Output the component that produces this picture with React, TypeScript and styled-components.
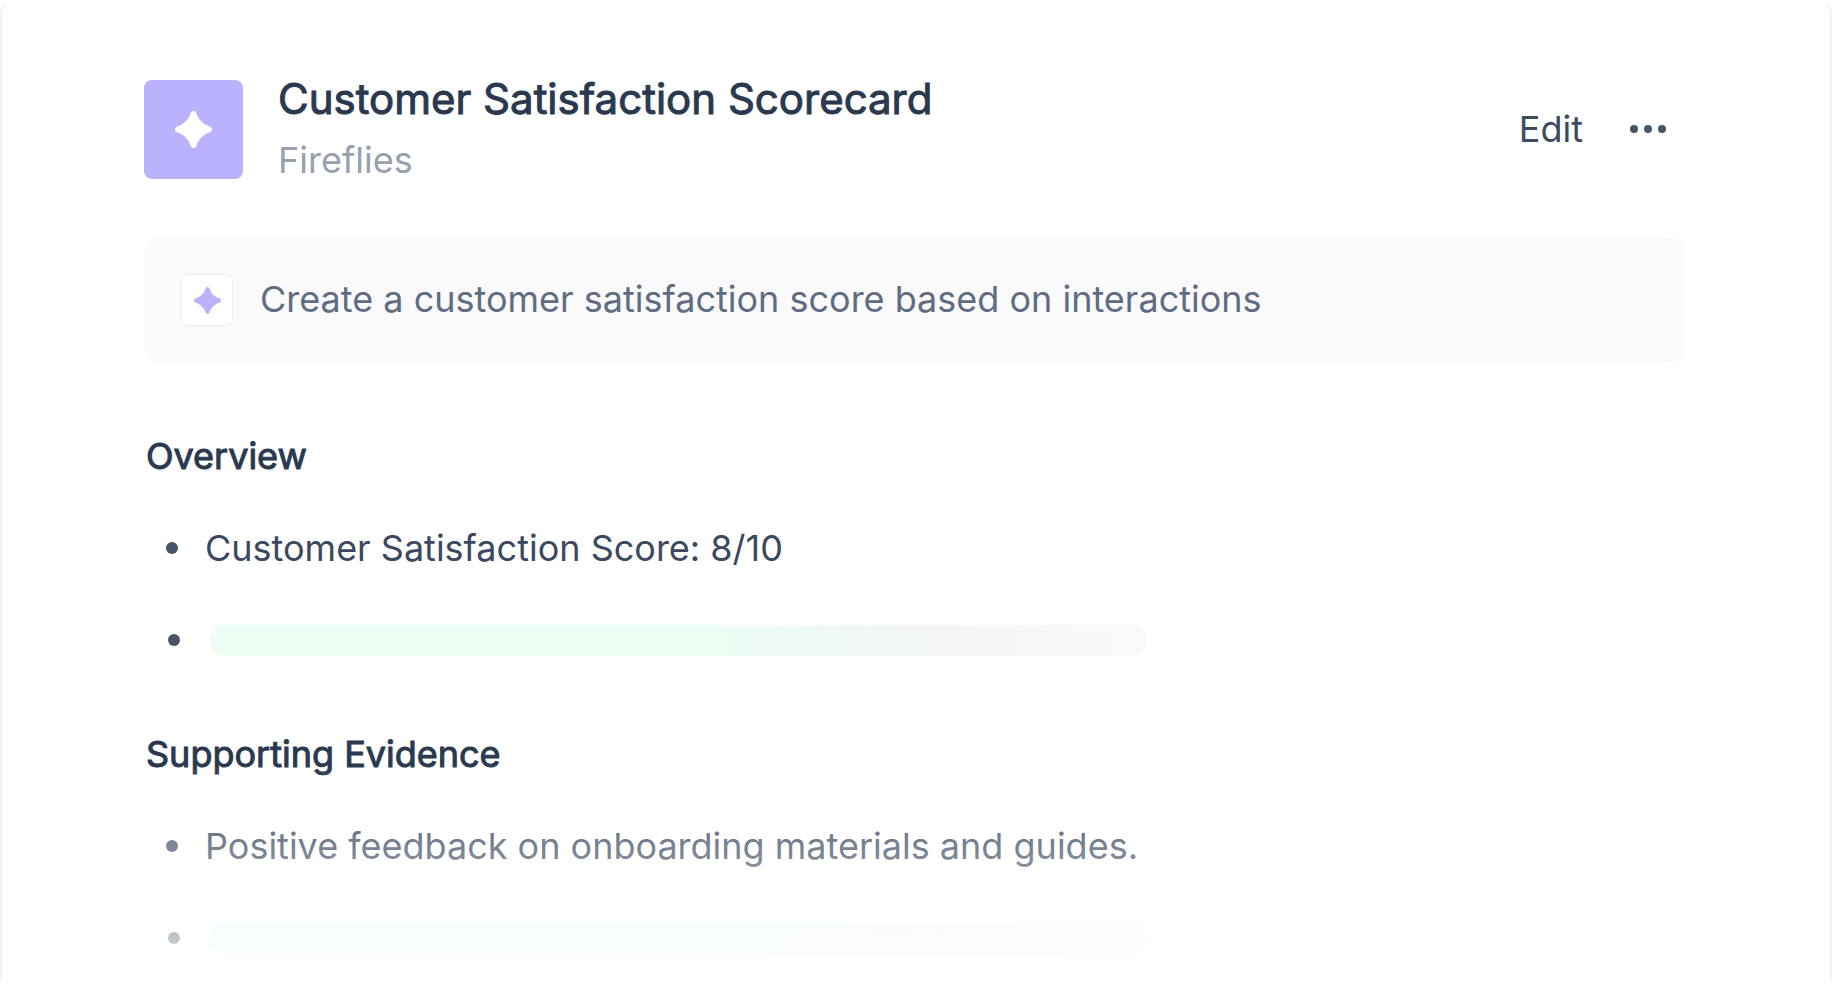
import React from "react";
import styled, { createGlobalStyle } from "styled-components";

const GlobalStyle = createGlobalStyle`
  * { box-sizing: border-box; }
  body {
    margin: 0;
    background: #fff;
    font-family: Inter, "Liberation Sans", sans-serif;
    font-size: 36px;
    line-height: 48px;
    color: #3b485e;
  }
  h1, h2, p, ul { margin: 0; padding: 0; }
`;

const Card = styled.main`
  position: relative;
  min-height: 100vh;
  padding: 75px 145px 27px 142px;
  border: solid #f0f4f5;
  border-width: 0 2px;
  border-radius: 14px;

  /* content fades out towards the bottom edge */
  &::after {
    content: "";
    position: absolute;
    inset: auto 0 0;
    height: 226px;
    background: linear-gradient(rgba(255, 255, 255, 0), rgba(255, 255, 255, 0.86));
    pointer-events: none;
  }
`;

const Header = styled.header`
  display: flex;
  align-items: center;
`;

const AppIcon = styled.div`
  display: flex;
  align-items: center;
  justify-content: center;
  width: 99px;
  height: 99px;
  border-radius: 8px;
  background: #bbb2fd;
  color: #fff;
`;

const Titles = styled.div`
  display: flex;
  flex: 1;
  flex-direction: column;
  gap: 13px;
  margin-left: 35px;
`;

const Title = styled.h1`
  font-size: 42px;
  font-weight: 400;
  line-height: 48px;
  color: #2b394f;
  -webkit-text-stroke: 1px currentColor;
`;

const Subtitle = styled.p`
  color: #98a1af;
`;

const Actions = styled.div`
  display: flex;
  align-items: center;
  gap: 46px;
  padding: 0 18px 2px 0;
`;

const Button = styled.button`
  display: flex;
  align-items: center;
  padding: 0;
  border: 0;
  background: none;
  font: inherit;
  color: #3d4b60;
  cursor: pointer;
`;

const Prompt = styled.section`
  display: flex;
  align-items: center;
  gap: 26px;
  min-height: 126px;
  margin-top: 53px;
  padding: 36px;
  border-radius: 16px;
  background: #fafafc;
  color: #606c81;
`;

const PromptIcon = styled.div`
  display: flex;
  align-items: center;
  justify-content: center;
  width: 54px;
  height: 54px;
  border: 2px solid #f0f4f6;
  border-radius: 8px;
  background: #fff;
  color: #bbb2fd;
`;

const PromptText = styled.p`
  padding-bottom: 2px;
`;

const Report = styled.div`
  display: flex;
  flex-direction: column;
  gap: 66px;
  margin-top: 69px;
  padding-left: 2px;
`;

const Heading = styled.h2`
  margin-bottom: 44px;
  font-size: 36px;
  font-weight: 400;
  color: #2b394f;
  -webkit-text-stroke: 1px currentColor;
`;

const List = styled.ul`
  display: flex;
  flex-direction: column;
  gap: 44px;
  list-style: none;
`;

const Item = styled.li<{ $loading?: boolean }>`
  display: flex;
  align-items: center;
  gap: ${(p) => (p.$loading ? 30 : 27)}px;
  min-height: 48px;
  padding-left: ${(p) => (p.$loading ? 22 : 20)}px;

  &::before {
    content: "";
    flex: none;
    width: 12px;
    height: 12px;
    border-radius: 50%;
    background: #475569;
  }
`;

const Skeleton = styled.div`
  width: 937px;
  max-width: 100%;
  height: 31px;
  border-radius: 16px;
  background: linear-gradient(90deg, #ecfdf3 54%, #f3f5f6 78%, #f9f9fc 96%);
`;

const Sparkle = ({ size }: { size: number }) => (
  <svg width={size} height={size} viewBox="-50 -50 100 100" fill="currentColor" aria-hidden="true">
    <path d="M0-50C4-50 7-47 8-43C13-27 27-13 43-8C47-7 50-4 50 0S47 7 43 8C27 13 13 27 8 43C7 47 4 50 0 50S-7 47-8 43C-13 27-27 13-43 8C-47 7-50 4-50 0S-47-7-43-8C-27-13-13-27-8-43C-7-47-4-50 0-50Z" />
  </svg>
);

const Dots = () => (
  <svg width="38" height="10" viewBox="0 0 38 10" fill="#475569" aria-hidden="true">
    <circle cx="5" cy="5" r="4" />
    <circle cx="19" cy="5" r="4" />
    <circle cx="33" cy="5" r="4" />
  </svg>
);

export default function App() {
  return (
    <>
      <GlobalStyle />
      <Card>
        <Header>
          <AppIcon>
            <Sparkle size={37} />
          </AppIcon>
          <Titles>
            <Title>Customer Satisfaction Scorecard</Title>
            <Subtitle>Fireflies</Subtitle>
          </Titles>
          <Actions>
            <Button type="button">Edit</Button>
            <Button type="button" aria-label="More options">
              <Dots />
            </Button>
          </Actions>
        </Header>
        <Prompt>
          <PromptIcon>
            <Sparkle size={27} />
          </PromptIcon>
          <PromptText>Create a customer satisfaction score based on interactions</PromptText>
        </Prompt>
        <Report>
          <section>
            <Heading>Overview</Heading>
            <List>
              <Item>Customer Satisfaction Score: 8/10</Item>
              <Item $loading>
                <Skeleton />
              </Item>
            </List>
          </section>
          <section>
            <Heading>Supporting Evidence</Heading>
            <List>
              <Item>Positive feedback on onboarding materials and guides.</Item>
              <Item $loading>
                <Skeleton />
              </Item>
            </List>
          </section>
        </Report>
      </Card>
    </>
  );
}
